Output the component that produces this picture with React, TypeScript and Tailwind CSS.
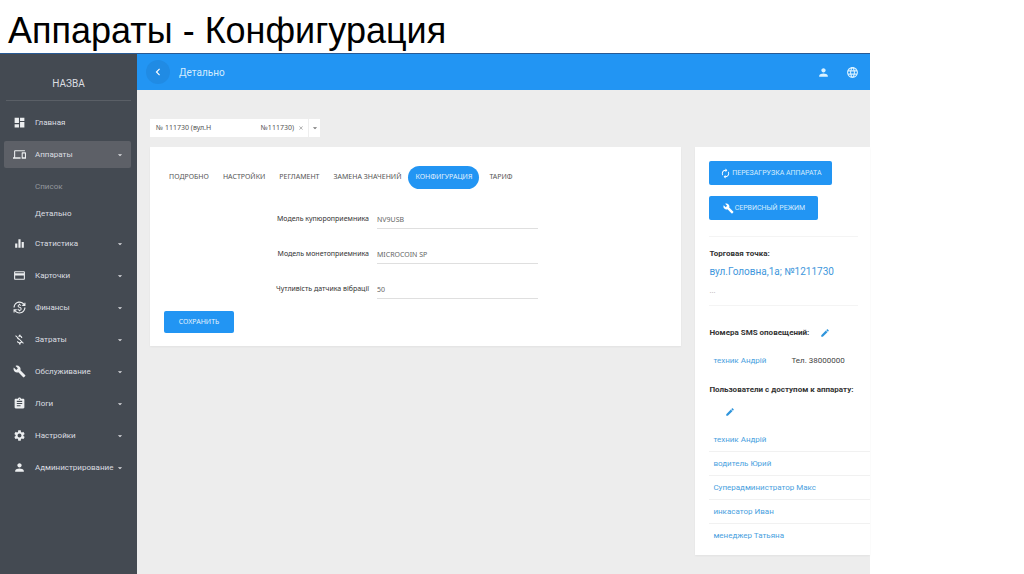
import type { ReactNode } from 'react';
import type { IconType } from 'react-icons';
import {
  MdArrowDropDown,
  MdAssignment,
  MdAutorenew,
  MdBuild,
  MdChevronLeft,
  MdClose,
  MdCreditCard,
  MdCurrencyExchange,
  MdDashboard,
  MdDevices,
  MdEdit,
  MdEqualizer,
  MdLanguage,
  MdMoneyOff,
  MdPerson,
  MdSettings,
} from 'react-icons/md';

type NavEntry = { label: string; icon: IconType; expandable?: boolean; active?: boolean };

const navTop: NavEntry[] = [
  { label: 'Главная', icon: MdDashboard },
  { label: 'Аппараты', icon: MdDevices, expandable: true, active: true },
];

const navBottom: NavEntry[] = [
  { label: 'Статистика', icon: MdEqualizer, expandable: true },
  { label: 'Карточки', icon: MdCreditCard, expandable: true },
  { label: 'Финансы', icon: MdCurrencyExchange, expandable: true },
  { label: 'Затраты', icon: MdMoneyOff, expandable: true },
  { label: 'Обслуживание', icon: MdBuild, expandable: true },
  { label: 'Логи', icon: MdAssignment, expandable: true },
  { label: 'Настройки', icon: MdSettings, expandable: true },
  { label: 'Администрирование', icon: MdPerson, expandable: true },
];

const tabs = ['Подробно', 'Настройки', 'Регламент', 'Замена значений', 'Конфигурация', 'Тариф'];

const fields = [
  { id: 'bill', label: 'Модель купюроприемника', value: 'NV9USB' },
  { id: 'coin', label: 'Модель монетоприемника', value: 'MICROCOIN SP' },
  { id: 'vibration', label: 'Чутливість датчика вібрації', value: '50' },
];

const users = ['техник Андрій', 'водитель Юрий', 'Суперадминистратор Макс', 'инкасатор Иван', 'менеджер Татьяна'];

function NavItem({ label, icon: Icon, expandable, active }: NavEntry) {
  return (
    <a
      href="#"
      className={`mb-[5px] flex h-[27px] items-center rounded-xs pr-1.5 pl-[9px] text-[8px] text-[#dcdee1] ${active ? 'bg-[#5d6067]' : ''}`}
    >
      <Icon className="mr-[9px] size-[13px] shrink-0 text-[#eceef0]" />
      <span className="flex-1 whitespace-nowrap">{label}</span>
      {expandable && <MdArrowDropDown className="size-[10px] shrink-0" />}
    </a>
  );
}

function Sidebar() {
  return (
    <nav className="w-[137px] shrink-0 bg-[#444a52] px-1 font-[Roboto,sans-serif]">
      <div className="mx-0.5 mb-2 flex h-[47px] items-center justify-center border-b border-[#5a5f66] pt-3 text-[10px] text-[#dcdee1]">
        НАЗВА
      </div>
      <div className="pr-0.5">
        {navTop.map((item) => (
          <NavItem key={item.label} {...item} />
        ))}
        <div className="mb-[3px] text-[8px]">
          <a href="#" className="flex h-[27px] items-center pl-[31px] text-[#93979d]">
            Список
          </a>
          <a href="#" className="flex h-[27px] items-center pl-[31px] text-[#dcdee1]">
            Детально
          </a>
        </div>
        {navBottom.map((item) => (
          <NavItem key={item.label} {...item} />
        ))}
      </div>
    </nav>
  );
}

function TopBar() {
  return (
    <header className="flex h-9 items-center bg-[#2295f3] px-[9px] font-[Roboto,sans-serif] text-white">
      <button
        aria-label="Назад"
        className="mr-[9px] flex size-6 items-center justify-center rounded-full bg-[#208be4]"
      >
        <MdChevronLeft className="size-[14px]" />
      </button>
      <h2 className="flex-1 text-[10px] text-[#d5ecfd]">Детально</h2>
      <button aria-label="Профиль" className="mr-4">
        <MdPerson className="size-[13px] text-[#d9f1ff]" />
      </button>
      <button aria-label="Язык" className="mr-0.5">
        <MdLanguage className="size-[13px] text-[#d9f1ff]" />
      </button>
    </header>
  );
}

function MachinePicker() {
  return (
    <div className="flex h-[18px] w-[170px] items-center bg-white text-[7px] text-[#555]">
      <span className="pl-1.5 whitespace-nowrap">№ 111730 (вул.Н</span>
      <span className="ml-auto whitespace-nowrap">№111730)</span>
      <button aria-label="Очистить" className="px-1">
        <MdClose className="size-[6px] text-[#777]" />
      </button>
      <button
        aria-label="Открыть список"
        className="flex h-full w-3 items-center justify-center border-l border-[#eee]"
      >
        <MdArrowDropDown className="size-[10px] text-[#777]" />
      </button>
    </div>
  );
}

function ConfigCard() {
  return (
    <section className="min-w-0 flex-1 bg-white px-[14px] pt-[19px] pb-[13px] shadow-xs">
      <div role="tablist" className="-ml-0.5 flex text-[7px] whitespace-nowrap uppercase">
        {tabs.map((tab) => (
          <button
            key={tab}
            role="tab"
            aria-selected={tab === 'Конфигурация'}
            className={`h-[23px] px-[7px] uppercase ${
              tab === 'Конфигурация' ? 'mr-[3px] rounded-full bg-[#2295f3] text-[#e3f2fd]' : 'text-[#555]'
            }`}
          >
            {tab}
          </button>
        ))}
      </div>
      <form>
        <div className="mt-[21px] mb-[7px] flex flex-col gap-4 text-[7px]">
          {fields.map((field) => (
            <div key={field.id} className="flex items-center">
              <label htmlFor={field.id} className="w-[213px] shrink-0 pr-2 text-right text-[#333]">
                {field.label}
              </label>
              <input
                id={field.id}
                defaultValue={field.value}
                className="h-[19px] w-[161px] border-b border-[#dfdfdf] text-[#666] outline-none"
              />
            </div>
          ))}
        </div>
        <button
          type="button"
          className="h-[22px] w-[70px] rounded-xs bg-[#2295f3] text-[7px] text-[#e3f2fd] uppercase"
        >
          Сохранить
        </button>
      </form>
    </section>
  );
}

function ActionButton({ icon: Icon, wide, children }: { icon: IconType; wide?: boolean; children: ReactNode }) {
  return (
    <button
      className={`flex h-[24px] items-center justify-center rounded-xs bg-[#2295f3] text-[7px] whitespace-nowrap text-[#d5ecfd] uppercase ${wide ? 'w-[123px]' : 'w-[109px]'}`}
    >
      <Icon className="mr-px size-[11px] text-white" />
      {children}
    </button>
  );
}

function DetailsPanel() {
  return (
    <aside className="w-[175px] shrink-0 bg-white pt-[14px] pb-[7px] pl-[14px] font-[Roboto,sans-serif] text-[8px] shadow-xs">
      <div className="flex flex-col gap-[11px]">
        <ActionButton icon={MdAutorenew} wide>
          Перезагрузка аппарата
        </ActionButton>
        <ActionButton icon={MdBuild}>Сервисный режим</ActionButton>
      </div>
      <hr className="mt-4 mr-3 border-[#f4f4f4]" />
      <h3 className="mt-[11px] leading-3 font-bold text-[#333]">Торговая точка:</h3>
      <a href="#" className="mt-[5px] block text-[10px] leading-[14px] text-[#3f97dc]">
        вул.Головна,1а; №1211730
      </a>
      <p className="mt-1.5 leading-3 text-[#aaa]">...</p>
      <hr className="mt-2 mr-3 border-[#f4f4f4]" />
      <div className="mt-[21px] flex items-center leading-3">
        <h3 className="font-bold text-[#333]">Номера SMS оповещений:</h3>
        <button aria-label="Изменить номера" className="ml-[11px]">
          <MdEdit className="size-[10px] text-[#2f95dc]" />
        </button>
      </div>
      <div className="mt-4 flex gap-[25px] pl-1 leading-3 whitespace-nowrap">
        <a href="#" className="text-[#4a9fe0]">
          техник Андрій
        </a>
        <span className="text-[#444]">Тел. 38000000</span>
      </div>
      <h3 className="mt-[17px] leading-3 font-bold whitespace-nowrap text-[#333]">
        Пользователи с доступом к аппарату:
      </h3>
      <button aria-label="Изменить пользователей" className="mt-[11px] ml-4 block">
        <MdEdit className="size-[10px] text-[#2f95dc]" />
      </button>
      <ul className="mt-[11px] divide-y divide-[#f1f1f1]">
        {users.map((user) => (
          <li key={user} className="flex h-6 items-center pl-1">
            <a href="#" className="text-[#4a9fe0]">
              {user}
            </a>
          </li>
        ))}
      </ul>
    </aside>
  );
}

export default function App() {
  return (
    <div className="flex min-h-screen flex-col bg-white">
      <h1 className="h-[53px] pt-[11px] pl-2 font-['Liberation_Sans',Arial,sans-serif] text-[36px] leading-10 text-black">
        Аппараты - Конфигурация
      </h1>
      <div className="flex w-[85%] flex-1 border-t border-[#285a94] bg-[#ededed] font-['Noto_Sans',sans-serif]">
        <Sidebar />
        <div className="flex min-w-0 flex-1 flex-col">
          <TopBar />
          <main className="flex-1 pt-[29px] pb-[18px] pl-[13px]">
            <MachinePicker />
            <div className="mt-[10px] flex items-start gap-[14px]">
              <ConfigCard />
              <DetailsPanel />
            </div>
          </main>
        </div>
      </div>
    </div>
  );
}
